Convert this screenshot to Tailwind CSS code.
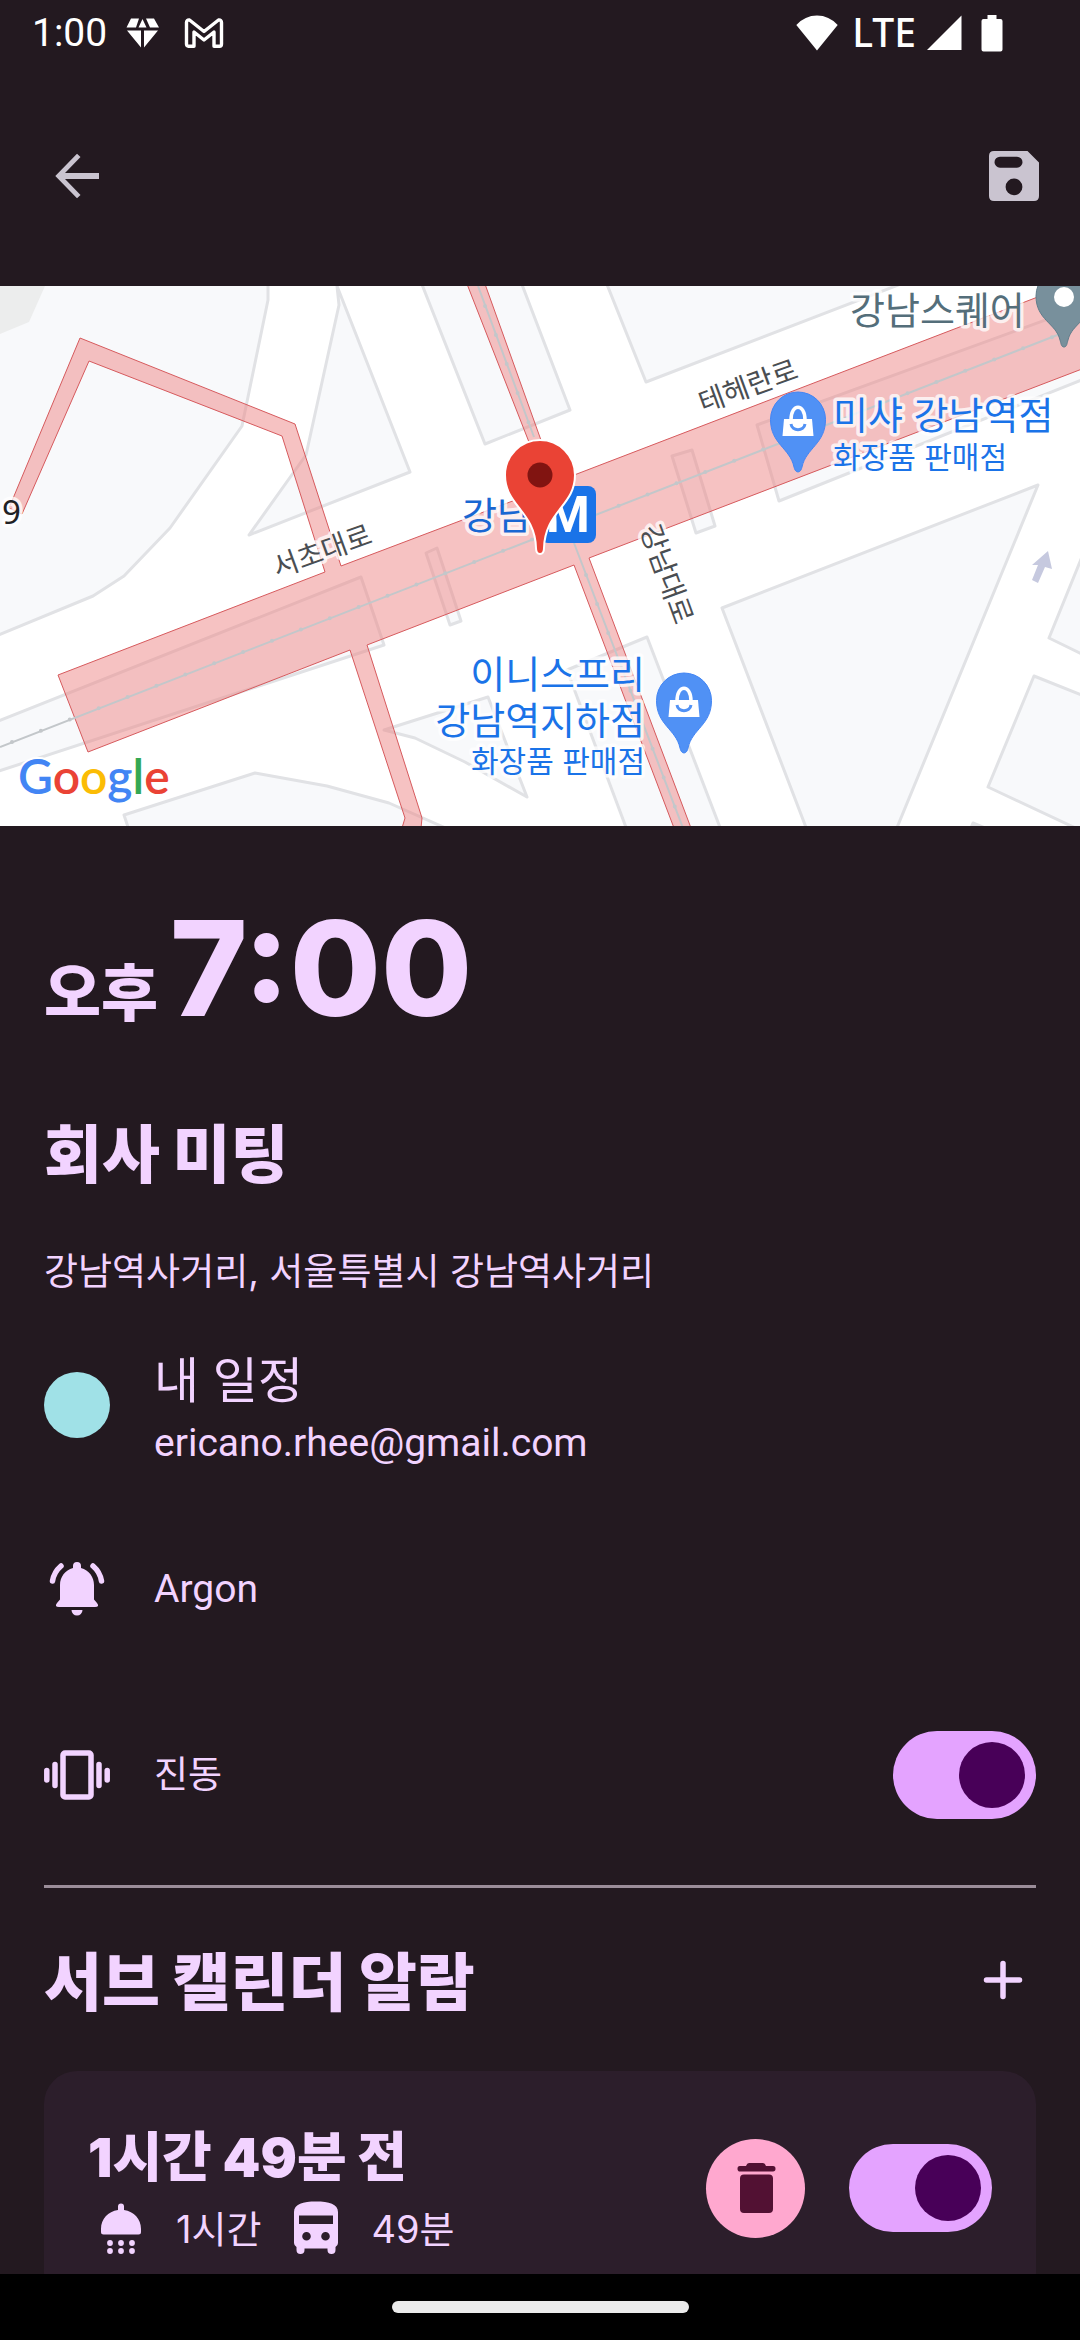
<!DOCTYPE html>
<html lang="ko">
<head>
<meta charset="utf-8">
<meta name="viewport" content="width=device-width, initial-scale=1">
<title>회사 미팅</title>
<script src="https://cdn.jsdelivr.net/npm/@tailwindcss/browser@4"></script>
</head>
<body class="flex h-screen flex-col overflow-hidden bg-[#231920] font-[Inter,'Noto_Sans_CJK_KR',sans-serif] text-[#f2d3ff]">

<!-- Status bar -->
<div class="flex h-[66px] shrink-0 items-center justify-between pr-[77px] pl-[32px] text-white">
  <div class="flex items-center">
    <span class="font-[Roboto,sans-serif] text-[39px] leading-[66px]">1:00</span>
    <svg class="ml-[19px] h-[30px] w-[34px]" viewBox="0 0 34 30" fill="#fff" aria-hidden="true"><path d="M5 0.500H13L10 9.500H0.500ZM16.500 1L20.500 9.500H12.500ZM20 0.500H28L33 9.500H24ZM1 12.500H15V29.500ZM18 12.500H32L18 29.500Z"/></svg>
    <svg class="ml-[24px] h-[30px] w-[40px]" viewBox="0 0 40 30" fill="none" stroke="#fff" stroke-width="3.400" stroke-linejoin="round" aria-hidden="true"><path d="M2.500 4.500Q2.500 1.700 5.500 2L20 13.500L34.500 2Q37.500 1.700 37.500 4.500V26Q37.500 28.300 35.500 28.300H30V14L20 22L10 14V28.300H4.500Q2.500 28.300 2.500 26Z"/></svg>
  </div>
  <div class="flex items-center">
    <svg class="h-[36px] w-[42px]" viewBox="0 0 42 36" fill="#fff" aria-hidden="true"><path d="M21 35.500L0.300 10Q9 0.500 21 0.500T41.700 10Z"/></svg>
    <span class="ml-[14px] pb-[3px] font-['Noto_Sans',sans-serif] text-[39px] leading-[60px] font-medium">LTE</span>
    <svg class="ml-[11px] h-[36px] w-[35px]" viewBox="0 0 35 36" fill="#fff" aria-hidden="true"><path d="M34.500 0.500V35H0Z"/></svg>
    <svg class="ml-[19px] h-[37px] w-[22px]" viewBox="0 0 22 37" fill="#fff" aria-hidden="true"><path d="M6.500 0H15.500V4H19.500Q21.500 4 21.500 6V34.500Q21.500 36.500 19.500 36.500H2.500Q.5 36.500 .5 34.500V6Q.5 4 2.500 4H6.500Z"/></svg>
  </div>
</div>

<!-- App bar -->
<header class="flex h-[220px] shrink-0 items-center justify-between pr-[33px] pl-[44px]">
  <button type="button" aria-label="뒤로" class="grid size-[66px] place-items-center">
    <svg class="size-[66px]" viewBox="0 0 66 66" fill="#cac4d0"><path d="M55 30V36H21L36.500 52L33 55.300L11.300 33L33 10.700L36.500 14L21 30Z"/></svg>
  </button>
  <button type="button" aria-label="저장" class="grid size-[66px] place-items-center">
    <svg class="size-[66px]" viewBox="0 0 66 66" fill="#cac4d0" fill-rule="evenodd"><path d="M13 8H46.500L58 19.500V53Q58 58 53 58H13Q8 58 8 53V13Q8 8 13 8ZM19 13.700A5.400 5.400 0 0 0 19 24.700H36A5.400 5.400 0 0 0 36 13.700ZM33 35.500A8.400 8.400 0 1 0 33 52.300A8.400 8.400 0 1 0 33 35.500Z"/></svg>
  </button>
</header>

<!-- Map -->
<svg class="block h-[540px] w-full shrink-0 bg-white" viewBox="0 0 1080 540" preserveAspectRatio="xMidYMid slice" role="img" aria-label="강남역 지도">
  <defs>
    <g id="shop">
      <path d="M0 53C-2.500 53-3.500 50-4 48C-8 29-27.500 25-27.500 0.500A27.500 27.500 0 0 1 27.500 0.500C27.500 25 8 29 4 48C3.500 50 2.500 53 0 53Z" fill="#5091f5" stroke="#4285f4" stroke-width="1"/>
      <path d="M-14 0H14L15.500 17H-15.500Z" fill="#fff"/>
      <path d="M-7 1C-7-16 7-16 7 1" fill="none" stroke="#fff" stroke-width="3.500"/>
      <path d="M-7 5C-6 12.500 6 12.500 7 5" fill="none" stroke="#5091f5" stroke-width="3"/>
    </g>
  </defs>
  <g fill="#f8f9fb" stroke="#e1e2e5" stroke-width="3" stroke-linejoin="round">
    <path d="M-4-4H268V14L242 140L170 242L124 290L93 310L-4 350Z"/>
    <path d="M337 0L339 19L306 169L249 249L410 186Z"/>
    <path d="M421-4L485 158L570 124L521-4Z"/>
    <path d="M606-4L646 96L906-4Z"/>
    <path d="M1084 20L757 139L779 215L1084 93Z"/>
    <path d="M672 170L692 164L715 240L696 247Z"/>
    <path d="M426 267L437 262L461 335L450 339Z"/>
    <path d="M-4 436L361 291L384 359L-4 486Z"/>
    <path d="M129 544L124 529L255 487L327 500L389 517L450 544Z"/>
    <path d="M384 444L488 411L527 511L465 476L415 452Z"/>
    <path d="M722 322L1038 199L896 544H807Z"/>
    <path d="M567 384L647 351L721 544H627Z"/>
    <path d="M1084 266L1049 352L1084 369Z"/>
    <path d="M1034 390L988 501L1084 546V410Z"/>
    <path d="M970 544L973 537L990 544Z"/>
  </g>
  <path d="M0 0H45L29 36L0 48Z" fill="#eceded"/>
  <g fill="#ed8585" fill-opacity=".5" stroke="#d65a5d" stroke-width="1">
    <path d="M58 389L325 286L282 150L89 75L22 228L9 222L80 52L295 138L341 280L547 202L467-2H485L556 196L1082-6V83L589 272L691 542H674L574 279L367 359L422 532L421 542H402L405 532L350 364L88 466Z"/>
  </g>
  <g fill="none" stroke="#c3c7ca">
    <path d="M0 461L1060 48M478 0L534 151M574 257L683 542" stroke-width="2"/>
    <path d="M12 456L1060 48M485 20L534 151M586 289L683 542" stroke-width="4" stroke-linecap="round" stroke-dasharray="0 31"/>
  </g>
  <path d="M1048 265L1052 283L1045 281L1038 297L1032 294L1038 279L1032 279Z" fill="#c6c9df"/>

  <g class="font-['Noto_Sans_CJK_KR',sans-serif]" stroke="#fff" stroke-opacity=".75" stroke-width="7" stroke-linejoin="round" paint-order="stroke">
    <text x="2" y="238" font-size="33" fill="#202124" class="font-['Noto_Sans',sans-serif]">9</text>
    <g font-size="28" fill="#4a4e52" text-anchor="middle">
      <text transform="translate(322 265) rotate(-20)" y="10">서초대로</text>
      <text transform="translate(748 100) rotate(-20)" y="10">테헤란로</text>
      <text transform="translate(667 288) rotate(70)" y="10">강남대로</text>
    </g>
    <text x="462" y="243" font-size="38" fill="#1967d2">강남</text>
    <text x="850" y="38" font-size="38" fill="#546e7a">강남스퀘어</text>
    <g fill="#1a73e8">
      <text x="833" y="143" font-size="38">미샤 강남역점</text>
      <text x="833" y="182" font-size="30">화장품 판매점</text>
      <g text-anchor="end">
        <text x="645" y="402" font-size="38">이니스프리</text>
        <text x="645" y="448" font-size="38">강남역지하점</text>
        <text x="645" y="486" font-size="30">화장품 판매점</text>
      </g>
    </g>
  </g>

  <rect x="540" y="200" width="56" height="57" rx="8" fill="#1a73e8"/>
  <text x="568" y="246" font-size="50" font-weight="700" fill="#fff" text-anchor="middle" class="font-[Roboto,sans-serif]">M</text>
  <use href="#shop" x="798" y="133"/>
  <use href="#shop" x="684" y="414"/>
  <path d="M1064 61C1061 61 1061 57 1060 54C1056 37 1036 34 1036 10A28 28 0 0 1 1092 10C1092 34 1072 37 1068 54C1067 57 1067 61 1064 61Z" fill="#78909c" stroke="#607d8b"/>
  <circle cx="1064" cy="11" r="10" fill="#fff"/>
  <path d="M540 268C537 268 536 266 536 262C535 225 505 220 505 189A35 35 0 0 1 575 189C575 220 545 225 544 262C544 266 543 268 540 268Z" fill="#ea4335" stroke="#fff" stroke-width="2"/>
  <circle cx="540" cy="189" r="12.500" fill="#811411"/>

  <text x="18" y="508" font-size="48" font-weight="600" stroke="#fff" stroke-width="4" paint-order="stroke" class="font-[Lato,sans-serif]"><tspan fill="#4285f4">G</tspan><tspan fill="#ea4335">o</tspan><tspan fill="#fbbc05">o</tspan><tspan fill="#4285f4">g</tspan><tspan fill="#34a853">l</tspan><tspan fill="#ea4335">e</tspan></text>
</svg>

<!-- Event details -->
<main class="flex min-h-0 flex-1 flex-col overflow-hidden px-[44px] pt-[62px]">
  <p class="flex shrink-0 items-baseline gap-[12px]">
    <span class="text-[62px] leading-[160px] font-extrabold">오후</span>
    <span class="text-[132px] leading-[160px] font-extrabold">7:00</span>
  </p>
  <h1 class="mt-[40px] shrink-0 text-[63px] leading-[80px] font-black">회사 미팅</h1>
  <p class="mt-[54px] shrink-0 text-[37px] leading-[48px]">강남역사거리, 서울특별시 강남역사거리</p>

  <div class="mt-[47px] flex shrink-0 items-center gap-[44px]">
    <span class="size-[66px] rounded-full bg-[#a0e1e7]"></span>
    <div>
      <p class="text-[49px] leading-[76px]">내 일정</p>
      <p class="font-[Roboto,sans-serif] text-[39px] leading-[48px]">ericano.rhee@gmail.com</p>
    </div>
  </div>

  <div class="mt-[78px] flex h-[88px] shrink-0 items-center gap-[44px]">
    <svg class="size-[66px]" viewBox="0 0 66 66" fill="#f2d3ff" aria-hidden="true"><path d="M33 6Q37 6 37 10V12C45 14 50 21 50 29V43.500L53 47Q54.500 49 54 50Q53.500 51 51 51H15Q12.500 51 12 50Q11.500 49 13 47L16 43.500V29C16 21 21 14 29 12V10Q29 6 33 6ZM27.500 54H38.500A5.500 5.500 0 0 1 27.500 54Z"/><path d="M17 10Q10 16 8.500 25M49 10Q56 16 57.500 25" fill="none" stroke="#f2d3ff" stroke-width="5.500" stroke-linecap="round"/></svg>
    <p class="font-[Roboto,sans-serif] text-[39px] leading-[48px]">Argon</p>
  </div>

  <label class="mt-[98px] flex h-[88px] shrink-0 items-center gap-[44px]">
    <svg class="size-[66px]" viewBox="0 0 66 66" fill="none" stroke="#f2d3ff" stroke-width="5.500" stroke-linecap="round" aria-hidden="true"><rect x="19" y="11" width="28" height="44" rx="2"/><path d="M11 22.500V43.500M2.800 28.500V38M55 22.500V43.500M63.200 28.500V38"/></svg>
    <span class="flex-1 text-[37px] leading-[48px]">진동</span>
    <input type="checkbox" checked class="flex h-[88px] w-[143px] appearance-none items-center rounded-full bg-[#4a3f4a] px-[11px] before:block before:size-[66px] before:rounded-full before:bg-[#480058] before:content-[''] checked:justify-end checked:bg-[#e4a3ff]">
  </label>

  <hr class="mt-[66px] shrink-0 border-t-[3px] border-[#9b8d99]">

  <div class="mt-[50px] flex h-[84px] shrink-0 items-center justify-between">
    <h2 class="pt-[4px] text-[63px] leading-[80px] font-black">서브 캘린더 알람</h2>
    <button type="button" aria-label="추가" class="grid size-[66px] place-items-center">
      <svg class="size-[66px]" viewBox="0 0 66 66" fill="none" stroke="#f2d3ff" stroke-width="5.500" stroke-linecap="round"><path d="M33 16.500V49.500M16.500 33H49.500"/></svg>
    </button>
  </div>

  <section class="mt-[49px] flex h-[234px] shrink-0 items-center gap-[44px] rounded-[33px] bg-[#2c1e2b] px-[44px]">
    <div class="flex-1 pt-[6px]">
      <h3 class="text-[54px] leading-[76px] font-black">1시간 49분 전</h3>
      <div class="flex h-[66px] items-center text-[38px] leading-[48px]">
        <svg class="size-[66px]" viewBox="0 0 66 66" fill="#f2d3ff" aria-hidden="true"><path d="M33 7.500Q36 7.500 36 10.500V14C46 15.500 53 23 53 33V36Q53 38.500 50.500 38.500H15.500Q13 38.500 13 36V33C13 23 20 15.500 30 14V10.500Q30 7.500 33 7.500Z"/><circle cx="22" cy="47" r="2.900"/><circle cx="33" cy="47" r="2.900"/><circle cx="44" cy="47" r="2.900"/><circle cx="22" cy="55" r="2.900"/><circle cx="33" cy="55" r="2.900"/><circle cx="44" cy="55" r="2.900"/></svg>
        <span class="ml-[22px]">1시간</span>
        <svg class="ml-[22px] size-[66px]" viewBox="0 0 66 66" fill="#f2d3ff" fill-rule="evenodd" aria-hidden="true"><path d="M11 16C11 8 20 5.500 33 5.500S55 8 55 16V47Q55 49.500 52.500 51V54Q52.500 58 48.500 58T44.500 54V52.500H21.500V54Q21.500 58 17.500 58T13.500 54V51Q11 49.500 11 47ZM16 19.500V28H50V19.500ZM23.500 36A4.300 4.300 0 1 0 23.500 44.600A4.300 4.300 0 1 0 23.500 36ZM42.500 36A4.300 4.300 0 1 0 42.500 44.600A4.300 4.300 0 1 0 42.500 36Z"/></svg>
        <span class="ml-[22px]">49분</span>
      </div>
    </div>
    <button type="button" aria-label="삭제" class="grid size-[99px] place-items-center rounded-full bg-[#ffa8cf]">
      <svg class="size-[66px]" viewBox="0 0 66 66" fill="#521133"><path d="M26 8H40Q42 8 43 11H50Q52.500 11 52.500 13.700T50 16.500H17Q14.500 16.500 14.500 13.700T17 11H23Q24 8 26 8ZM21 19.500H46Q50 19.500 50 23.500V54Q50 58 46 58H21Q17 58 17 54V23.500Q17 19.500 21 19.500Z"/></svg>
    </button>
    <input type="checkbox" checked aria-label="1시간 49분 전 알람" class="flex h-[88px] w-[143px] appearance-none items-center rounded-full bg-[#4a3f4a] px-[11px] before:block before:size-[66px] before:rounded-full before:bg-[#480058] before:content-[''] checked:justify-end checked:bg-[#e4a3ff]">
  </section>
</main>

<!-- Gesture bar -->
<footer class="flex h-[66px] shrink-0 items-center justify-center bg-black">
  <span class="h-[12px] w-[297px] rounded-full bg-[#ebebeb]"></span>
</footer>
</body>
</html>
